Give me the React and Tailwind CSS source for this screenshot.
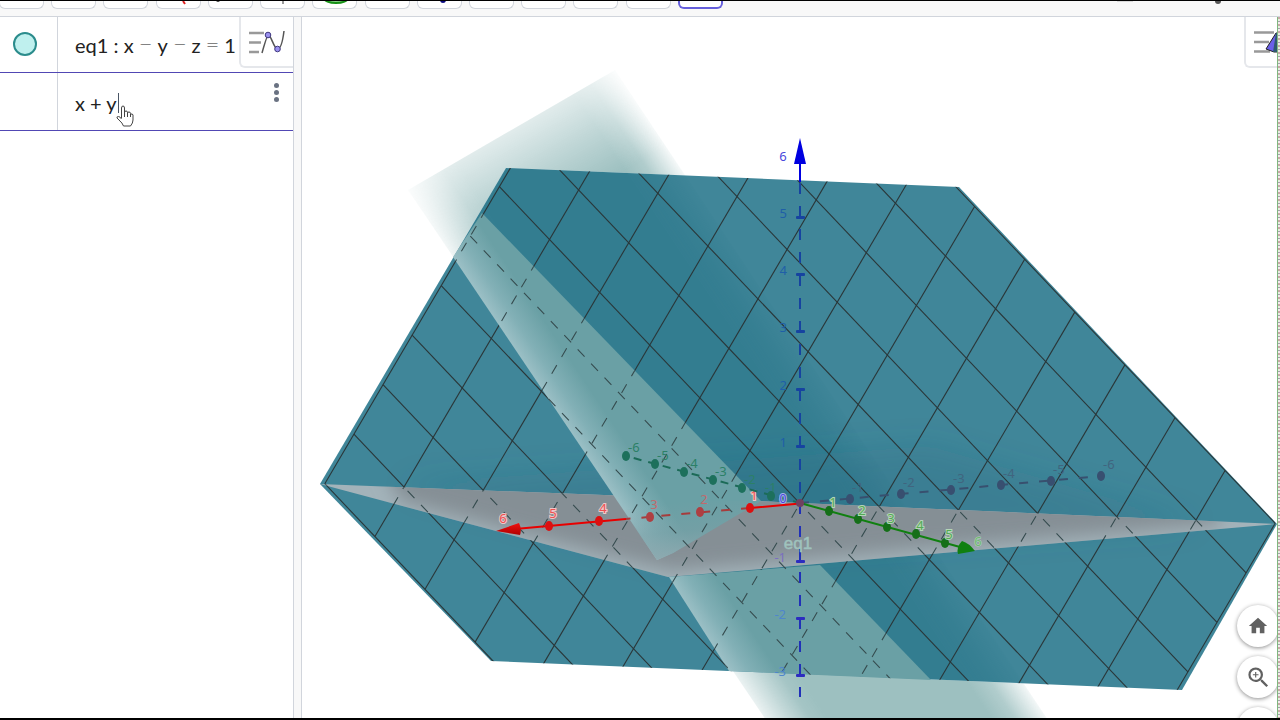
import { MdHome, MdZoomIn, MdZoomOut } from 'react-icons/md';

const ORIGIN = [800, 503.5];
const STEP_A = [50.1, 52.8];
const STEP_B = [-29.1, 49.5];
const RANGE = [-6, -5, -4, -3, -2, -1, 0, 1, 2, 3, 4, 5, 6];

const PLANE = '506,168 959,187 1277,524 1182,690 491,661 320,484';
const FLOOR = '320,484 757,501 800,503 1277,524 668,577';
const BAND_UPPER = '482,213 761,501 734,517 673,553 657,560 453,257';
const BAND_LOWER = '669,577 820,565 931,680 729,671';
const STRIP = '408,190 615,70 1048,720 766,720';

const at = (a, b) => [
    ORIGIN[0] + a * STEP_A[0] + b * STEP_B[0],
    ORIGIN[1] + a * STEP_A[1] + b * STEP_B[1],
];

const X_TICKS = [
    { n: 5, x: 549, y: 526 },
    { n: 4, x: 599, y: 521 },
    { n: 3, x: 650, y: 517 },
    { n: 2, x: 700, y: 512 },
    { n: 1, x: 750, y: 508 },
];
const X_NEG = [
    { n: -1, x: 850, y: 499 },
    { n: -2, x: 901, y: 494 },
    { n: -3, x: 951, y: 490 },
    { n: -4, x: 1001, y: 485 },
    { n: -5, x: 1051, y: 481 },
    { n: -6, x: 1101, y: 476 },
];
const Y_NEG = [
    { n: -6, x: 626, y: 456 },
    { n: -5, x: 655, y: 464 },
    { n: -4, x: 684, y: 472 },
    { n: -3, x: 713, y: 480 },
    { n: -2, x: 742, y: 488 },
    { n: -1, x: 771, y: 496 },
];
const Y_TICKS = [
    { n: 1, x: 829, y: 511 },
    { n: 2, x: 858, y: 519 },
    { n: 3, x: 887, y: 527 },
    { n: 4, x: 916, y: 534 },
    { n: 5, x: 945, y: 543 },
];
const Z_TICKS = [
    { n: 5, y: 217, color: '#1f5fa8' },
    { n: 4, y: 274, color: '#1f5fa8' },
    { n: 3, y: 331, color: '#1f5fa8' },
    { n: 2, y: 389, color: '#1f5fa8' },
    { n: 1, y: 446, color: '#1f5fa8' },
    { n: -1, y: 561, color: '#7a6fc0' },
    { n: -2, y: 618, color: '#4f86cc' },
    { n: -3, y: 675, color: '#4f86cc' },
];

function GridLines(props) {
    return (
        <g fill="none" {...props}>
            {RANGE.map((k) => {
                const [x1, y1] = at(-6, k);
                const [x2, y2] = at(6, k);
                return <line key={`a${k}`} x1={x1} y1={y1} x2={x2} y2={y2} />;
            })}
            {RANGE.map((k) => {
                const [x1, y1] = at(k, -6);
                const [x2, y2] = at(k, 6);
                return <line key={`b${k}`} x1={x1} y1={y1} x2={x2} y2={y2} />;
            })}
        </g>
    );
}

function Ticks({ points, dot, text, outline, rise = 8, shift = 2 }) {
    return points.map(({ n, x, y }) => (
        <g key={n}>
            <ellipse cx={x} cy={y} rx="4" ry="5" fill={dot} />
            <text
                x={n < 0 ? x + shift : x + 4}
                y={y - rise}
                textAnchor={n < 0 ? 'start' : 'middle'}
                fill={text}
                stroke={outline}
                strokeWidth={outline ? 2 : 0}
                paintOrder="stroke"
            >
                {n}
            </text>
        </g>
    ));
}

function Scene() {
    return (
        <svg
            viewBox="302 17 978 701"
            preserveAspectRatio="xMinYMin slice"
            className="block h-full w-full font-['Noto_Sans',sans-serif] text-[13px]"
            role="img"
            aria-label="3D view"
        >
            <defs>
                <linearGradient id="across" gradientUnits="userSpaceOnUse" x1="408" y1="190" x2="607" y2="57">
                    <stop offset="0" stopColor="#fff" stopOpacity="0.15" />
                    <stop offset="0.1" stopColor="#fff" stopOpacity="0.62" />
                    <stop offset="0.17" stopColor="#fff" stopOpacity="0.92" />
                    <stop offset="0.23" stopColor="#fff" />
                    <stop offset="0.8" stopColor="#fff" />
                    <stop offset="0.88" stopColor="#fff" stopOpacity="0.8" />
                    <stop offset="1" stopColor="#fff" stopOpacity="0.08" />
                </linearGradient>
                <linearGradient id="along" gradientUnits="userSpaceOnUse" x1="511" y1="130" x2="557" y2="209">
                    <stop offset="0" stopColor="#fff" stopOpacity="0.3" />
                    <stop offset="0.5" stopColor="#fff" stopOpacity="0.66" />
                    <stop offset="1" stopColor="#fff" />
                </linearGradient>
                <linearGradient id="band" gradientUnits="userSpaceOnUse" x1="408" y1="190" x2="607" y2="57">
                    <stop offset="0" stopColor="#9cc0c6" />
                    <stop offset="0.07" stopColor="#82b0b6" />
                    <stop offset="0.17" stopColor="#6aa0a5" />
                </linearGradient>
                <linearGradient id="bandTip" gradientUnits="userSpaceOnUse" x1="662" y1="562" x2="655" y2="505">
                    <stop offset="0" stopColor="#8faab0" />
                    <stop offset="0.5" stopColor="#789fa5" stopOpacity="0.6" />
                    <stop offset="1" stopColor="#789fa5" stopOpacity="0" />
                </linearGradient>
                <linearGradient id="cone" x1="0" y1="0" x2="0" y2="1">
                    <stop offset="0" stopColor="#f01010" />
                    <stop offset="1" stopColor="#b00000" />
                </linearGradient>
                <mask id="acrossMask" maskUnits="userSpaceOnUse" x="302" y="17" width="978" height="710">
                    <rect x="302" y="17" width="978" height="710" fill="url(#across)" />
                </mask>
                <mask id="alongMask" maskUnits="userSpaceOnUse" x="302" y="17" width="978" height="710">
                    <rect x="302" y="17" width="978" height="710" fill="url(#along)" />
                </mask>
                <mask id="outside" maskUnits="userSpaceOnUse" x="302" y="17" width="978" height="710">
                    <rect x="302" y="17" width="978" height="710" fill="#fff" />
                    <polygon points={PLANE} fill="#000" />
                </mask>
                <mask id="visible" maskUnits="userSpaceOnUse" x="302" y="17" width="978" height="710">
                    <polygon points={PLANE} fill="#fff" />
                    <polygon points={FLOOR} fill="#000" />
                    <polygon points={BAND_UPPER} fill="#000" />
                    <polygon points={BAND_LOWER} fill="#000" />
                </mask>
                <clipPath id="hidden">
                    <polygon points={FLOOR} />
                    <polygon points={BAND_UPPER} />
                    <polygon points={BAND_LOWER} />
                </clipPath>
                <clipPath id="plane">
                    <polygon points={PLANE} />
                </clipPath>
                <clipPath id="floor">
                    <polygon points={FLOOR} />
                </clipPath>
                <filter id="soft" x="-20%" y="-60%" width="140%" height="220%">
                    <feGaussianBlur stdDeviation="14" />
                </filter>
                <filter id="softFloor" x="-20%" y="-60%" width="140%" height="220%">
                    <feGaussianBlur stdDeviation="9" />
                </filter>
            </defs>

            <g mask="url(#outside)">
                <g mask="url(#alongMask)">
                    <g mask="url(#acrossMask)">
                        <polygon points={STRIP} fill="#79a9a9" fillOpacity="0.735" />
                    </g>
                </g>
            </g>

            <polygon points={PLANE} fill="#408699" />
            <g clipPath="url(#plane)">
                <g mask="url(#acrossMask)">
                    <polygon points={STRIP} fill="#186b7e" fillOpacity="0.3" />
                </g>
                <polygon
                    points="400,484 930,446 1200,524 668,560"
                    fill="#1d6478"
                    fillOpacity="0.2"
                    filter="url(#soft)"
                />
            </g>

            <polygon points={FLOOR} fill="#a3b3ba" />
            <g clipPath="url(#floor)">
                <polygon
                    points="370,440 1220,460 1220,524 930,548 672,571 560,543 400,501"
                    fill="#858f95"
                    filter="url(#softFloor)"
                />
            </g>
            <polygon points={BAND_UPPER} fill="url(#band)" />
            <polygon points="628,500 761,501 734,517 673,553 657,560 616,500" fill="url(#bandTip)" />
            <polygon points={BAND_LOWER} fill="url(#band)" />

            <g mask="url(#visible)">
                <GridLines stroke="#2a3638" strokeWidth="1.1" />
            </g>
            <g clipPath="url(#hidden)">
                <GridLines stroke="#364c4f" strokeWidth="1.1" strokeDasharray="10 9.5" />
            </g>

            {/* x axis */}
            <line x1="800" y1="503" x2="1101" y2="476" stroke="#38506f" strokeWidth="2" strokeDasharray="9 11" />
            <Ticks points={X_NEG} dot="#384f70" text="#40657f" rise={7} />
            <line x1="750" y1="508" x2="626" y2="519" stroke="#a63c3c" strokeWidth="2" strokeDasharray="9 11" />
            <path d="M626 519L515 529M800 503.500L750 508" stroke="#e80000" strokeWidth="2" />
            <Ticks points={X_TICKS.slice(0, 2)} dot="#dc1010" text="#ee5050" outline="#ecc8ca" />
            <Ticks points={X_TICKS.slice(2, 4)} dot="#ae3f42" text="#c06a6c" />
            <Ticks points={X_TICKS.slice(4)} dot="#dc1010" text="#ee5050" outline="#ecc8ca" />
            <path d="M496 531L519 523Q522 529 520 535Z" fill="url(#cone)" />
            <text x="503" y="523" textAnchor="middle" fill="#ee5050" stroke="#ecc8ca" strokeWidth="2" paintOrder="stroke">
                6
            </text>

            {/* y axis */}
            <line x1="626" y1="456" x2="800" y2="503" stroke="#1c6b58" strokeWidth="2" strokeDasharray="8 7" strokeDashoffset="-8" />
            <Ticks points={Y_NEG.slice(0, 5)} dot="#1d705c" text="#2c8067" rise={4} />
            <Ticks points={Y_NEG.slice(5)} dot="#1d705c" text="#2c8067" rise={4} shift={-6} />
            <line x1="800" y1="503" x2="960" y2="547" stroke="#108010" strokeWidth="2" />
            <Ticks points={Y_TICKS} dot="#156f18" text="#55aa55" outline="#b5d5b8" rise={4} />
            <path d="M975 551L958 554Q956 547 962 541Q969 543 975 551Z" fill="#108010" />
            <text x="978" y="546" textAnchor="middle" fill="#70b874" stroke="#b5d5b8" strokeWidth="1" paintOrder="stroke">
                6
            </text>

            {/* z axis */}
            <path d="M800 160V182" stroke="#0000e0" strokeWidth="2" />
            <path d="M800 138L806 164H794Z" fill="#0000e0" />
            <line x1="800" y1="183" x2="800" y2="500" stroke="#1643a0" strokeWidth="2" strokeDasharray="11 12" />
            <line x1="800" y1="503" x2="800" y2="697" stroke="#2030b8" strokeWidth="2" strokeDasharray="11 12" />
            <text x="783" y="161" textAnchor="middle" fill="#4848dc">
                6
            </text>
            {Z_TICKS.map(({ n, y, color }) => (
                <g key={n}>
                    <rect x="796" y={y - 1} width="9" height="3" rx="1" fill={n > 0 ? '#1643a0' : '#2c2cc0'} />
                    <text x={n > 0 ? 787 : 786} y={y + 1} textAnchor="end" fill={color}>
                        {n}
                    </text>
                </g>
            ))}
            <circle cx="800" cy="503" r="4" fill="#704060" />
            <text x="783" y="503" textAnchor="middle" fontSize="12" fill="#4848dc" stroke="#a8b4e8" strokeWidth="2" paintOrder="stroke">
                0
            </text>
            <text
                x="798"
                y="549"
                textAnchor="middle"
                fontSize="17"
                fill="#9fc2bd"
                stroke="#9fc2bd"
                strokeWidth="0.500"
                className="font-['Liberation_Sans',sans-serif]"
            >
                eq1
            </text>
        </svg>
    );
}

function ToolMark({ index }) {
    return (
        <svg viewBox="0 0 44 8" className="h-2 w-11" aria-hidden="true">
            {index === 3 && <path d="M26 0L28 3" stroke="#e02020" strokeWidth="2" />}
            {index === 4 && <circle cx="9" cy="-1" r="2" fill="#444" />}
            {index === 5 && <path d="M22 0V3" stroke="#333" strokeWidth="1" />}
            {index === 6 && <ellipse cx="23" cy="-3" rx="12" ry="5" fill="#8c8" stroke="#159015" strokeWidth="2" />}
            {index === 8 && <circle cx="25" cy="-1" r="3" fill="#0a0a80" />}
        </svg>
    );
}

function Toolbar() {
    return (
        <header className="relative flex h-[17px] shrink-0 items-start justify-between border-t border-b border-t-black border-b-gray-300 bg-[#f8f8f8]">
            <div className="-ml-px flex w-[724px] justify-between">
                {RANGE.concat(7).map((n, i) => (
                    <button
                        key={n}
                        type="button"
                        aria-label={`Tool ${i + 1}`}
                        className={`h-2 w-[45px] overflow-hidden rounded-b-md bg-white ${
                            i === 13
                                ? 'border-x-2 border-b-2 border-[#665fdc]'
                                : 'border-x border-b border-gray-300'
                        }`}
                    >
                        <ToolMark index={i} />
                    </button>
                ))}
            </div>
            <svg viewBox="0 0 130 4" className="mr-[50px] h-1 w-[130px]" aria-hidden="true">
                <path d="M17 0H33" stroke="#bbb" strokeWidth="1" />
                <circle cx="118" cy="0" r="3" fill="#555" />
            </svg>
        </header>
    );
}

const EQUATION = ['eq1', ':', 'x', '−', 'y', '−', 'z', '=', '1'];

function Algebra() {
    return (
        <aside className="relative w-[293px] shrink-0 bg-white font-[Lato,sans-serif] text-[20px] text-[#222]">
            <div className="flex h-14 border-b border-[#5148b4]">
                <div className="flex w-[58px] shrink-0 justify-center border-r border-gray-300 pt-[15px] pr-2">
                    <button
                        type="button"
                        aria-label="Toggle eq1"
                        className="h-6 w-6 rounded-full border-2 border-[#2b8c8c] bg-[#bff0ee]"
                    />
                </div>
                <div className="ml-[17px] flex w-[161px] justify-between pt-4 leading-6">
                    {EQUATION.map((token, i) => (
                        <span
                            key={i}
                            className={/[−=]/.test(token) ? "font-['DejaVu_Sans',sans-serif] text-base font-extralight leading-6" : ''}
                        >
                            {token}
                        </span>
                    ))}
                </div>
            </div>
            <div className="flex h-[58px] border-b border-[#5148b4]">
                <div className="w-[58px] shrink-0 border-r border-gray-300" />
                <div className="relative flex-1">
                    <input
                        aria-label="Algebra input"
                        defaultValue="x + y"
                        className="mt-[18px] ml-[17px] block h-6 w-40 bg-transparent outline-none"
                    />
                    <span className="absolute top-5 left-[60px] h-5 w-px bg-gray-600" />
                    <svg viewBox="0 0 18 22" className="absolute top-8 left-[58px] h-[22px] w-[18px]" aria-hidden="true">
                        <path
                            d="M5.500 13V3Q5.500 1 7 1T8.500 3V9V7.500Q8.500 6 10 6T11.500 7.500V9V8Q11.500 7 13 7T14.500 8.500V10Q14.500 8.500 16 9T17 11V15Q17 18 14.500 21H7.500Q6.500 18 3 15L1 13Q.5 11.500 2.500 11.500Q4 11.500 5.500 14M8.500 8V12M11.500 9V12M14.500 10V12"
                            fill="#fff"
                            stroke="#444"
                            strokeWidth="1"
                            strokeLinejoin="round"
                        />
                    </svg>
                    <button
                        type="button"
                        aria-label="More"
                        className="absolute top-[7px] right-[14px] flex h-6 w-[5px] flex-col items-center justify-center gap-0.5"
                    >
                        <span className="h-[5px] w-[5px] rounded-full bg-gray-500" />
                        <span className="h-[5px] w-[5px] rounded-full bg-gray-500" />
                        <span className="h-[5px] w-[5px] rounded-full bg-gray-500" />
                    </button>
                </div>
            </div>
            <button
                type="button"
                aria-label="Algebra style bar"
                className="absolute top-0 right-0 flex h-[51px] w-[54px] items-center justify-center rounded-bl-md border-b-2 border-l-2 border-gray-200 bg-white"
            >
                <svg viewBox="0 0 36 24" className="h-6 w-9" aria-hidden="true">
                    <path d="M0 3H15M0 12.500H12M0 22H10" stroke="#999" strokeWidth="2.500" />
                    <path d="M13 23Q18 5 19.500 5C22 5 25 19 28.500 19C32 19 34 9 35 1" fill="none" stroke="#555" strokeWidth="1.500" />
                    <circle cx="19" cy="5" r="2.800" fill="#9a90ee" stroke="#403880" />
                    <circle cx="28.500" cy="19" r="2.800" fill="#9a90ee" stroke="#403880" />
                </svg>
            </button>
        </aside>
    );
}

const ROUND =
    'flex h-[42px] w-[42px] shrink-0 items-center justify-center rounded-full bg-white text-[#616161] shadow-[0_1px_4px_rgba(0,0,0,0.45)]';

function GraphicsView() {
    return (
        <main className="relative min-w-0 flex-1 overflow-hidden bg-white">
            <Scene />
            <button
                type="button"
                aria-label="3D style bar"
                className="absolute top-0 right-0 h-[51px] w-9 overflow-hidden rounded-bl-md border-b-2 border-l-2 border-gray-200 bg-white pl-2"
            >
                <svg viewBox="0 0 25 24" className="h-6 w-[25px]" aria-hidden="true">
                    <path d="M0 2.500H20M0 12H15M0 21.500H16" stroke="#999" strokeWidth="2.500" />
                    <path d="M22 3L12 19L20 22H25V3Z" fill="#6a60e8" stroke="#222" />
                    <path d="M22 3L19 22H25V3Z" fill="#2f5a70" />
                </svg>
            </button>
            <div className="absolute top-[588px] right-px flex flex-col gap-[9px]">
                <button type="button" aria-label="Home" className={ROUND}>
                    <MdHome size={22} />
                </button>
                <button type="button" aria-label="Zoom in" className={ROUND}>
                    <MdZoomIn size={27} />
                </button>
                <button type="button" aria-label="Zoom out" className={ROUND}>
                    <MdZoomOut size={27} />
                </button>
            </div>
            <div className="absolute inset-y-0 right-0 w-[3px] border-l border-[#7fb87f] bg-[repeating-linear-gradient(180deg,#c9a9a9_0px,#c9a9a9_2px,#e6efe0_2px,#e6efe0_4px,#a9a0ad_4px,#a9a0ad_5px,#f3ecec_5px,#f3ecec_7px)]" />
        </main>
    );
}

export default function App() {
    return (
        <div className="flex h-screen flex-col overflow-hidden border-b-2 border-black bg-white">
            <Toolbar />
            <div className="flex min-h-0 flex-1">
                <Algebra />
                <div className="w-[9px] shrink-0 border-x border-gray-300 bg-[#f8f8f8]" />
                <GraphicsView />
            </div>
        </div>
    );
}
